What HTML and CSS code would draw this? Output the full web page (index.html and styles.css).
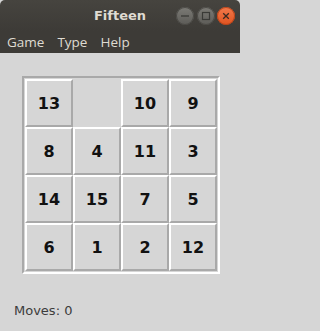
FILE: index.html
```html
<!DOCTYPE html>
<html>
<head>
<meta charset="utf-8">
<link rel="stylesheet" href="styles.css">
</head>
<body>
<div class="window">
  <div class="titlebar">
    <div class="spacer"></div>
    <div class="title">Fifteen</div>
    <div class="controls">
      <span class="wbtn gray">
        <svg width="18" height="18" viewBox="0 0 18 18"><line x1="5" y1="9" x2="13" y2="9" stroke="#3a3a37" stroke-width="1.3"/></svg>
      </span>
      <span class="wbtn gray">
        <svg width="18" height="18" viewBox="0 0 18 18"><rect x="5.5" y="5.5" width="7" height="7" fill="none" stroke="#3a3a37" stroke-width="1.2"/></svg>
      </span>
      <span class="wbtn close">
        <svg width="18" height="18" viewBox="0 0 18 18"><path d="M6.2 6.2 L11.8 11.8 M11.8 6.2 L6.2 11.8" stroke="#3a2a22" stroke-width="1.3"/></svg>
      </span>
    </div>
  </div>
  <div class="menubar">
    <span class="menu">Game</span>
    <span class="menu">Type</span>
    <span class="menu">Help</span>
  </div>
  <div class="content">
    <div class="frame">
      <div class="board">
        <div class="tile">13</div>
        <div class="tile empty"></div>
        <div class="tile">10</div>
        <div class="tile">9</div>
        <div class="tile">8</div>
        <div class="tile">4</div>
        <div class="tile">11</div>
        <div class="tile">3</div>
        <div class="tile">14</div>
        <div class="tile">15</div>
        <div class="tile">7</div>
        <div class="tile">5</div>
        <div class="tile">6</div>
        <div class="tile">1</div>
        <div class="tile">2</div>
        <div class="tile">12</div>
      </div>
    </div>
    <div class="status">Moves: 0</div>
  </div>
</div>
</body>
</html>
```
FILE: styles.css
```css
html, body {
  margin: 0;
  padding: 0;
  background: #d6d6d6;
}
.window {
  width: 240px;
  height: 331px;
  overflow: hidden;
  display: flex;
  flex-direction: column;
  background: #d6d6d6;
}
.titlebar {
  height: 31px;
  display: grid;
  grid-template-columns: 1fr auto 1fr;
  align-items: center;
  background: linear-gradient(#46443f, #3d3b37);
  border-radius: 5px 5px 0 0;
}
.title {
  font-family: "DejaVu Sans", sans-serif;
  font-weight: bold;
  font-size: 13px;
  color: #dfdbd2;
}
.controls {
  justify-self: end;
  display: flex;
  gap: 2.5px;
  padding-right: 5px;
}
.wbtn {
  width: 18px;
  height: 18px;
  border-radius: 50%;
  display: block;
  box-sizing: border-box;
}
.wbtn svg {
  display: block;
}
.wbtn.gray {
  background: linear-gradient(#7c7b76, #5c5b57);
  box-shadow: inset 0 0 0 1px #4a4945;
}
.wbtn.close {
  background: linear-gradient(#f27a4c, #e0531f);
  box-shadow: inset 0 0 0 1px #b8441a;
}
.menubar {
  height: 22px;
  display: flex;
  align-items: center;
  background: #3d3b37;
  padding-left: 7px;
  gap: 13px;
}
.menu {
  font-family: "Open Sans", sans-serif;
  font-size: 13.5px;
  color: #dfdbd2;
  line-height: 16px;
}
.content {
  flex: 1;
  padding: 23px 0 0 22px;
}
.frame {
  display: inline-block;
  border-style: solid;
  border-width: 2px;
  border-color: #a9a9a9 #ffffff #ffffff #a9a9a9;
  padding: 1px;
}
.board {
  display: grid;
  grid-template-columns: repeat(4, 48px);
  grid-template-rows: repeat(4, 48px);
}
.tile {
  box-sizing: border-box;
  border-style: solid;
  border-width: 2px;
  border-color: #ffffff #a9a9a9 #a9a9a9 #ffffff;
  display: flex;
  align-items: center;
  justify-content: center;
  font-family: "DejaVu Sans", sans-serif;
  font-weight: bold;
  font-size: 16px;
  color: #111;
}
.tile.empty {
  border-color: transparent;
}
.status {
  margin: 29px 0 0 -8px;
  font-family: "DejaVu Sans", sans-serif;
  font-size: 13px;
  line-height: 16px;
  color: #3c3c3c;
}
```
